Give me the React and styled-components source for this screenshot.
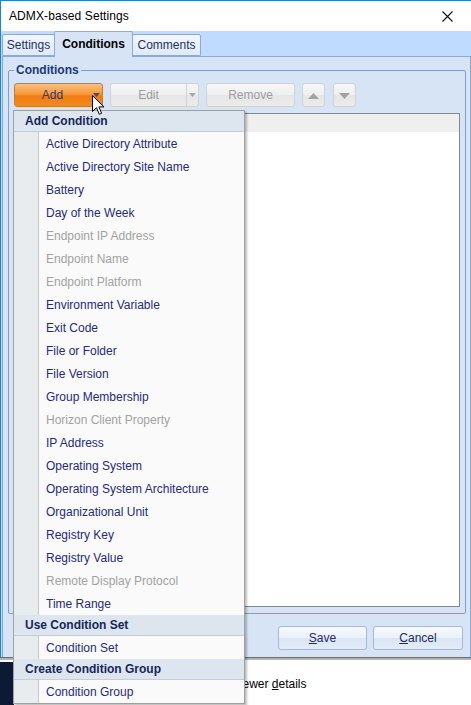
import React from 'react';
import styled, { createGlobalStyle } from 'styled-components';

const GlobalStyle = createGlobalStyle`
  html, body {
    margin: 0;
    padding: 0;
    background: #ffffff;
  }
  body {
    font-family: "Liberation Sans", Arial, sans-serif;
    font-size: 12px;
  }
`;

const Screen = styled.div`
  position: relative;
  width: 471px;
  height: 705px;
  overflow: hidden;
  background: #ffffff;
  display: flex;
  flex-direction: column;
`;

const Dialog = styled.div`
  width: 471px;
  flex: 0 0 658px;
  box-sizing: border-box;
  border: 1px solid #1883d7;
  border-right: none;
  display: flex;
  flex-direction: column;
  background: #bfdbff;
`;

const TitleBar = styled.div`
  height: 30px;
  flex: 0 0 30px;
  background: #ffffff;
  display: flex;
  align-items: center;
  justify-content: space-between;
  padding: 0 18px 0 8px;
`;

const Title = styled.span`
  color: #000000;
  font-size: 12px;
  letter-spacing: 0.1px;
`;

const TabArea = styled.div`
  flex: 1;
  display: flex;
  flex-direction: column;
  padding: 0 0 0 1px;
`;

const TabStrip = styled.div`
  height: 25px;
  flex: 0 0 25px;
  display: flex;
  align-items: flex-end;
  position: relative;
  z-index: 1;
`;

const Tab = styled.div`
  box-sizing: border-box;
  height: ${p => (p.$active ? '26px' : '22px')};
  margin-bottom: ${p => (p.$active ? '-1px' : '0')};
  width: ${p => p.$w}px;
  margin-left: ${p => (p.$first ? '0' : '-1px')};
  border: 1px solid #8eaad4;
  border-bottom: ${p => (p.$active ? 'none' : '1px solid #8eaad4')};
  border-radius: 2px 2px 0 0;
  background: ${p => (p.$active ? '#d6e4f5' : 'linear-gradient(#f3f7fc, #dfeaf8)')};
  color: ${p => (p.$active ? '#000000' : '#1e3262')};
  font-weight: ${p => (p.$active ? 'bold' : 'normal')};
  display: flex;
  align-items: center;
  justify-content: center;
  padding-bottom: ${p => (p.$active ? '2px' : '0')};
`;

const TabPanel = styled.div`
  flex: 1;
  box-sizing: border-box;
  width: 469px;
  border: 1px solid #8aaad6;
  border-bottom: none;
  background: #d6e4f5;
  display: flex;
  flex-direction: column;
`;

const GroupBox = styled.fieldset`
  flex: 1;
  margin: 6px 4px 0 5px;
  padding: 6px 5px 6px 5px;
  border: 1px solid #7f9fcf;
  border-radius: 2px;
  display: flex;
  flex-direction: column;
  min-height: 0;
`;

const Legend = styled.legend`
  padding: 0 2px;
  margin-left: 0;
  color: #1c3a72;
  font-weight: bold;
  font-size: 12px;
`;

const Toolbar = styled.div`
  display: flex;
  gap: 7px;
  height: 24px;
`;

const ToolButton = styled.div`
  box-sizing: border-box;
  width: ${p => p.$w || 89}px;
  height: 24px;
  border-radius: 3px;
  border: 1px solid ${p => (p.$primary ? '#d07a26' : '#d2d2d2')};
  background: ${p =>
    p.$primary
      ? 'linear-gradient(#fcc07e 0%, #f79a3c 45%, #f07c10 55%, #f48a22 100%)'
      : 'linear-gradient(#f6f6f6 0%, #efefef 50%, #e6e6e6 51%, #ebebeb 100%)'};
  color: ${p => (p.$primary ? '#34346e' : '#9c9c9c')};
  font-size: 12px;
  display: flex;
  align-items: center;
  margin-left: ${p => p.$ml || 0}px;
`;

const ButtonLabel = styled.span`
  flex: 1;
  text-align: center;
`;

const SplitPart = styled.span`
  width: 11px;
  height: 100%;
  border-left: 1px solid ${p => (p.$primary ? 'transparent' : '#d2d2d2')};
  display: flex;
  align-items: center;
  justify-content: center;
`;

const ListBox = styled.div`
  flex: 1;
  margin-top: 6px;
  border: 1px solid #828790;
  background: #ffffff;
  display: flex;
  flex-direction: column;
`;

const ListHeader = styled.div`
  height: 18px;
  background: #efefef;
`;

const Footer = styled.div`
  display: flex;
  justify-content: flex-end;
  gap: 6px;
  padding: 12px 7px 7px 0;
`;

const DialogButton = styled.div`
  box-sizing: border-box;
  width: ${p => p.$w}px;
  height: 24px;
  border: 1px solid #a6b8d2;
  border-radius: 3px;
  background: linear-gradient(#f6f9fd 0%, #eaf1fa 50%, #dae6f5 51%, #e3ecf8 100%);
  color: #1d2b66;
  display: flex;
  align-items: center;
  justify-content: center;
`;

const BackWindow = styled.div`
  flex: 1;
  display: flex;
  border-top: 2px solid #b4b4b4;
  background: #ffffff;
`;

const DarkStrip = styled.div`
  width: 14px;
  margin-top: 2px;
  background: #0c1b33;
`;

const DetailsText = styled.div`
  margin: 17px 0 0 218px;
  color: #000000;
  font-size: 12px;
`;

const Menu = styled.div`
  position: absolute;
  left: 13px;
  top: 110px;
  width: 232px;
  box-sizing: border-box;
  border: 1px solid #a0a0a0;
  background: #fafafa;
  box-shadow: 2px 2px 2px rgba(0, 0, 0, 0.25);
  display: flex;
  flex-direction: column;
  z-index: 5;
`;

const MenuHeader = styled.div`
  height: 20px;
  border-bottom: 1px solid #c5ced8;
  background: #dde6ef;
  color: #16265c;
  font-weight: bold;
  display: flex;
  align-items: center;
  padding-left: 11px;
`;

const MenuItem = styled.div`
  height: 23px;
  display: flex;
  align-items: center;
  color: ${p => (p.$disabled ? '#a2a2a2' : '#262a7c')};
`;

const Gutter = styled.span`
  width: 24px;
  height: 100%;
  background: #e9ecee;
  border-right: 1px solid #c8c8c8;
  margin-right: 7px;
`;

const Cursor = styled.svg`
  position: absolute;
  left: 92px;
  top: 95px;
  z-index: 10;
`;

const groups = [
  {
    title: 'Add Condition',
    items: [
      ['Active Directory Attribute'],
      ['Active Directory Site Name'],
      ['Battery'],
      ['Day of the Week'],
      ['Endpoint IP Address', true],
      ['Endpoint Name', true],
      ['Endpoint Platform', true],
      ['Environment Variable'],
      ['Exit Code'],
      ['File or Folder'],
      ['File Version'],
      ['Group Membership'],
      ['Horizon Client Property', true],
      ['IP Address'],
      ['Operating System'],
      ['Operating System Architecture'],
      ['Organizational Unit'],
      ['Registry Key'],
      ['Registry Value'],
      ['Remote Display Protocol', true],
      ['Time Range'],
    ],
  },
  { title: 'Use Condition Set', items: [['Condition Set']] },
  { title: 'Create Condition Group', items: [['Condition Group']] },
];

const Triangle = ({ down, color, size = 5 }) => (
  <svg width={size * 2 + 1} height={size + 1} viewBox={`0 0 ${size * 2 + 1} ${size + 1}`}>
    <polygon
      points={down ? `0,0 ${size * 2 + 1},0 ${size + 0.5},${size + 1}` : `0,${size + 1} ${size * 2 + 1},${size + 1} ${size + 0.5},0`}
      fill={color}
    />
  </svg>
);

export default function App() {
  return (
    <>
      <GlobalStyle />
      <Screen>
        <Dialog>
          <TitleBar>
            <Title>ADMX-based Settings</Title>
            <svg width="11" height="11" viewBox="0 0 11 11">
              <path d="M0.5 0.5 L10.5 10.5 M10.5 0.5 L0.5 10.5" stroke="#111" strokeWidth="1.1" />
            </svg>
          </TitleBar>
          <TabArea>
            <TabStrip>
              <Tab $w={53} $first>Settings</Tab>
              <Tab $w={79} $active>Conditions</Tab>
              <Tab $w={69}>Comments</Tab>
            </TabStrip>
            <TabPanel>
              <GroupBox>
                <Legend>Conditions</Legend>
                <Toolbar>
                  <ToolButton $primary>
                    <ButtonLabel>Add</ButtonLabel>
                    <SplitPart $primary>
                      <Triangle down color="#4a4a6a" size={3} />
                    </SplitPart>
                  </ToolButton>
                  <ToolButton>
                    <ButtonLabel>Edit</ButtonLabel>
                    <SplitPart>
                      <Triangle down color="#a8a8a8" size={3} />
                    </SplitPart>
                  </ToolButton>
                  <ToolButton>
                    <ButtonLabel>Remove</ButtonLabel>
                  </ToolButton>
                  <ToolButton $w={23}>
                    <ButtonLabel>
                      <Triangle color="#a2a2a2" size={5} />
                    </ButtonLabel>
                  </ToolButton>
                  <ToolButton $w={23} $ml={1}>
                    <ButtonLabel>
                      <Triangle down color="#a2a2a2" size={5} />
                    </ButtonLabel>
                  </ToolButton>
                </Toolbar>
                <ListBox>
                  <ListHeader />
                </ListBox>
              </GroupBox>
              <Footer>
                <DialogButton $w={89}>
                  <span><u>S</u>ave</span>
                </DialogButton>
                <DialogButton $w={90}>
                  <span><u>C</u>ancel</span>
                </DialogButton>
              </Footer>
            </TabPanel>
          </TabArea>
        </Dialog>
        <BackWindow>
          <DarkStrip />
          <DetailsText>
            Viewer <u>d</u>etails
          </DetailsText>
        </BackWindow>

        <Menu>
          {groups.map(g => (
            <React.Fragment key={g.title}>
              <MenuHeader>{g.title}</MenuHeader>
              {g.items.map(([label, disabled]) => (
                <MenuItem key={label} $disabled={disabled}>
                  <Gutter />
                  {label}
                </MenuItem>
              ))}
            </React.Fragment>
          ))}
        </Menu>

        <Cursor width="13" height="21" viewBox="0 0 13 21">
          <path
            d="M0.5 0.5 L0.5 16.5 L4.5 12.7 L7.3 19.3 L9.6 18.3 L6.9 11.9 L12 11.9 Z"
            fill="#ffffff"
            stroke="#000000"
            strokeWidth="1"
            strokeLinejoin="round"
          />
        </Cursor>
      </Screen>
    </>
  );
}
